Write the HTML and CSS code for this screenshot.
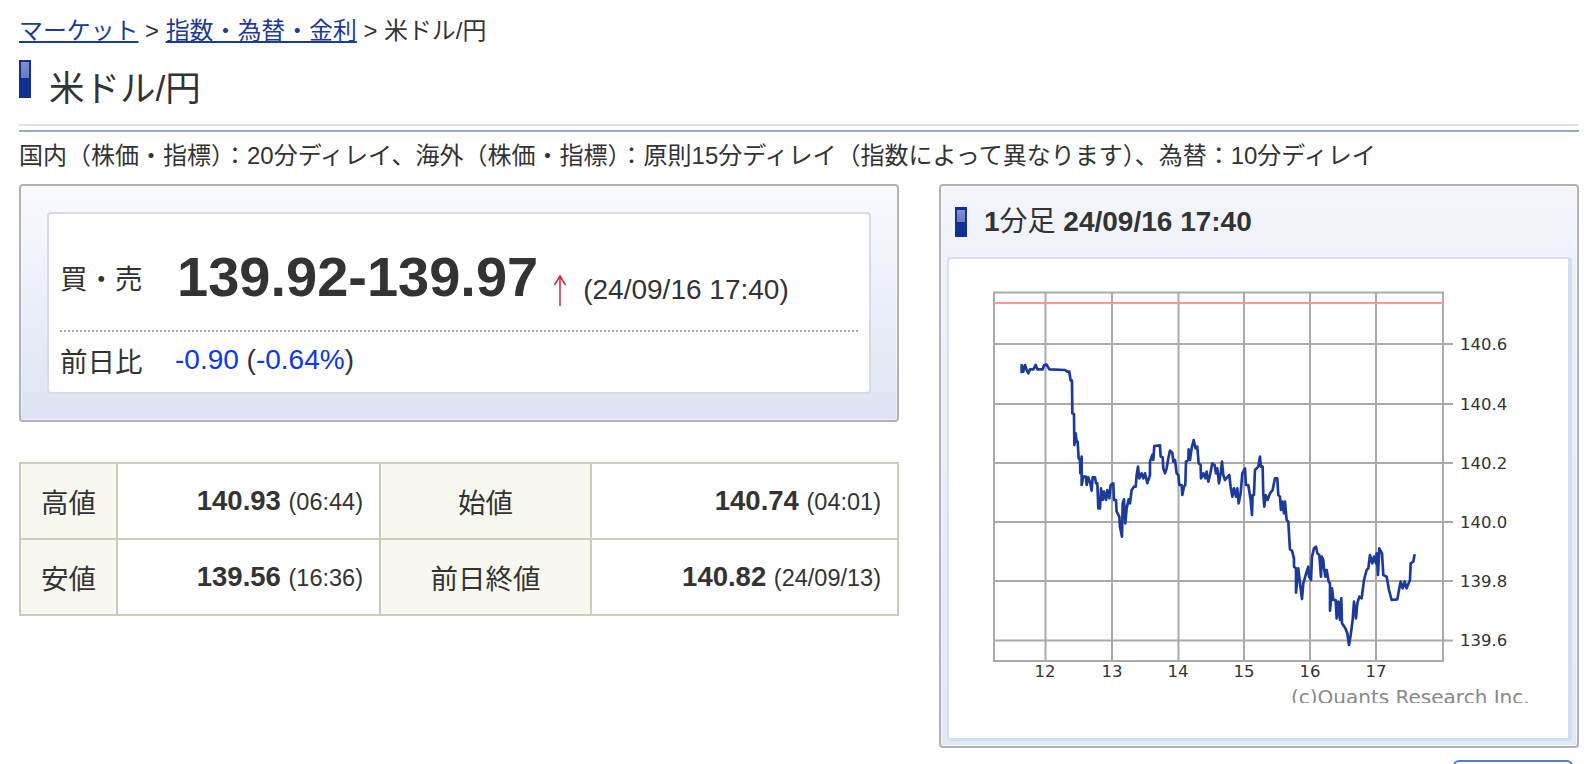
FILE: index.html
```html
<!DOCTYPE html>
<html lang="ja">
  <head>
    <meta charset="utf-8">
    <title>米ドル/円</title>
    <link rel="stylesheet" href="styles.css">
  </head>
  <body>
    <p class="crumbs"><a href="#">マーケット</a> &gt; <a href="#">指数・為替・金利</a> &gt; 米ドル/円</p>
    <h1 class="page-title"><span class="mark mark-large"></span>米ドル/円</h1>
    <div class="rule"></div>
    <p class="notice">国内（株価・指標）：20分ディレイ、海外（株価・指標）：原則15分ディレイ（指数によって異なります）、為替：10分ディレイ</p>

    <div class="columns">
      <div class="left">
        <div class="panel quote">
          <div class="card">
            <div class="quote-row">
              <span class="quote-label">買・売</span>
              <span class="price">139.92-139.97</span>
              <svg class="arrow" width="14" height="33" viewBox="0 0 14 33"><path d="M7 32V2M1.500 11L7 2l5.500 9"/></svg>
              <span class="stamp">(24/09/16 17:40)</span>
            </div>
            <div class="change-row">
              <span class="quote-label">前日比</span>
              <span class="change"><b>-0.90</b> (<b>-0.64%</b>)</span>
            </div>
          </div>
        </div>

        <table class="prices">
          <colgroup>
            <col class="col-a">
            <col class="col-b">
            <col class="col-c">
            <col class="col-d">
          </colgroup>
          <tr>
            <th>高値</th>
            <td><b>140.93</b> <small>(06:44)</small></td>
            <th>始値</th>
            <td><b>140.74</b> <small>(04:01)</small></td>
          </tr>
          <tr>
            <th>安値</th>
            <td><b>139.56</b> <small>(16:36)</small></td>
            <th>前日終値</th>
            <td><b>140.82</b> <small>(24/09/13)</small></td>
          </tr>
        </table>
      </div>

      <div class="right">
        <div class="panel chart-panel">
          <h2 class="chart-title"><span class="mark"></span>1<span class="thin">分足</span>&nbsp;24/09/16 17:40</h2>
          <div class="chart-card">
            <svg class="chart" width="618" height="441" viewBox="950 262 618 441">
              <g class="grid">
                <path d="M994 292.500H1443V661H994Z"/>
                <path d="M1045.500 292V661M1112 292V661M1178.500 292V661M1244 292V661M1310 292V661M1376 292V661"/>
                <path d="M994 344H1453M994 404H1453M994 463H1453M994 522H1453M994 581H1453M994 640.500H1453"/>
              </g>
              <path class="limit" d="M994 303H1443"/>
              <polyline class="trace" transform="translate(980 340) scale(.3333)" points="125,100 125,75 130,95 135,75 140,90 145,100 150,88 160,88 167,75 172,88 188,88 192,76 200,74 208,88 255,90 262,95 268,95 272,122 276,122 277,220 282,222 283,315 287,280 290,305 293,305 296,355 300,360 301,400 305,350 305,435 310,410 318,410 320,435 325,412 331,430 335,452 338,412 345,412 348,430 352,430 355,505 360,505 363,445 368,480 372,455 378,480 382,450 388,475 392,435 400,430 402,480 408,480 410,515 418,530 420,560 426,590 428,490 432,478 436,550 440,505 446,478 450,490 455,450 462,440 467,440 470,405 474,380 478,415 485,400 490,415 495,400 502,430 510,405 510,365 517,345 520,360 523,318 540,316 542,350 548,352 550,385 555,400 560,385 565,355 570,332 577,338 580,365 585,360 590,400 595,405 598,435 605,435 607,465 612,440 616,435 618,365 625,360 626,328 630,360 635,325 641,300 647,325 652,320 656,370 662,375 663,415 670,400 676,415 680,395 685,425 690,405 697,370 704,375 708,400 712,385 717,430 722,400 726,365 730,405 735,420 748,405 752,440 757,470 762,445 768,470 772,445 776,490 782,460 787,400 795,385 798,435 805,435 812,480 816,525 818,465 822,465 825,390 835,380 840,350 843,380 848,380 850,465 853,500 857,465 863,480 870,460 878,450 885,415 892,415 895,465 900,470 903,510 907,485 912,520 915,485 920,540 925,545 927,580 930,628 936,632 942,655"/>
              <polyline class="trace" transform="translate(1240 420) scale(.3333)" points="162,414 162,440 168,445 168,518 175,445 180,490 186,537 190,490 197,465 205,440 207,470 213,480 216,410 222,385 228,380 232,400 238,405 243,470 245,410 250,420 252,445 256,470 260,450 266,485 270,490 270,572 276,505 280,540 287,540 290,595 295,545 300,600 304,535 306,610 316,625 322,640 327,675 332,645 338,600 342,545 348,595 352,550 358,530 365,535 372,480 380,450 385,445 390,405 397,430 402,410 408,430 410,400 414,465 418,385 426,400 430,465 440,470 447,510 455,540 472,538 478,505 482,485 488,505 494,485 500,505 510,480 512,430 520,425 524,403"/>
              <g class="ticks">
                <text x="1460" y="350">140.6</text>
                <text x="1460" y="410">140.4</text>
                <text x="1460" y="469">140.2</text>
                <text x="1460" y="528">140.0</text>
                <text x="1460" y="587">139.8</text>
                <text x="1460" y="646">139.6</text>
              </g>
              <g class="ticks ticks-x">
                <text x="1045" y="677">12</text>
                <text x="1112" y="677">13</text>
                <text x="1178" y="677">14</text>
                <text x="1244" y="677">15</text>
                <text x="1310" y="677">16</text>
                <text x="1376" y="677">17</text>
              </g>
              <text class="credit" x="1291" y="703.500">(c)Quants Research Inc.</text>
            </svg>
          </div>
        </div>
        <div class="button-row"><a class="more" href="#"></a></div>
      </div>
    </div>
  </body>
</html>
```

FILE: styles.css
```css
html {
    overflow: hidden;
    background: white;
}

body {
    margin: 0;
    padding: 0 17px 0 19px;
    font-family: "Liberation Sans", "Noto Sans CJK JP", sans-serif;
    font-size: 23.900px;
    color: #333;
}

a {
    color: #1c3a9a;
}

.crumbs {
    margin: 0;
    padding-top: 16px;
    line-height: 30px;
}

.page-title {
    display: flex;
    margin: 14px 0 0;
    height: 64px;
    font-size: 35.500px;
    font-weight: normal;
    line-height: 58px;
}

.mark {
    display: block;
    flex: none;
    width: 12px;
    height: 30px;
    margin-right: 17px;
    background: #12308f linear-gradient(#7f92cc, #647cc2) 2px 3px / 8px 12px no-repeat;
}

.mark-large {
    height: 38px;
    margin-right: 18px;
    background-position: 2px 2px;
    background-size: 8px 16px;
}

.rule {
    height: 2px;
    padding-top: 2px;
    border-top: 2px solid #dce6f2;
    border-bottom: 2px solid #8fadd9;
}

.notice {
    margin: 0;
    padding-top: 8px;
    height: 44px;
    font-size: 24px;
    line-height: 32px;
    white-space: nowrap;
}

.columns {
    display: flex;
    justify-content: space-between;
    align-items: flex-start;
}

.left {
    width: 880px;
}

.right {
    width: 640px;
}

.panel {
    box-sizing: border-box;
    border: 2px solid #b2b2b2;
    border-radius: 4px;
    background: linear-gradient(#f9fafe, #dde3f3);
    box-shadow: inset 0 0 0 1px rgba(255, 255, 255, .5);
}

.quote {
    height: 238px;
    padding: 26px;
}

.card {
    box-sizing: border-box;
    height: 182px;
    padding: 0 11px;
    background: white;
    border: 2px solid #d8dbe3;
    border-radius: 4px;
}

.quote-row {
    display: flex;
    align-items: center;
    box-sizing: border-box;
    height: 118px;
    padding-top: 9px;
    border-bottom: 2px dotted #aaa;
}

.quote-label {
    width: 117px;
    flex: none;
    font-size: 27.500px;
}

.price {
    font-size: 56px;
    font-weight: bold;
}

.arrow {
    margin: 27px 16px 0 15px;
    fill: none;
    stroke: #d0283c;
    stroke-width: 1.500;
}

.stamp {
    margin-top: 26px;
    font-size: 28px;
}

.change-row {
    display: flex;
    align-items: center;
    height: 56px;
}

.change {
    margin-left: -2px;
    font-size: 28px;
}

.change b {
    font-weight: normal;
    color: #0b37ee;
}

.prices {
    width: 878px;
    margin-top: 40px;
    border-collapse: collapse;
    table-layout: fixed;
}

.col-a {
    width: 97px;
}

.col-b {
    width: 263px;
}

.col-c {
    width: 211px;
}

.col-d {
    width: 307px;
}

.prices th,
.prices td {
    height: 74px;
    padding: 0;
    border: 2px solid #ccccbb;
}

.prices th {
    background: #f8f8f0;
    font-size: 27.500px;
    font-weight: normal;
}

.prices td {
    padding-right: 16px;
    text-align: right;
    font-size: 27.500px;
}

.prices small {
    font-size: 23.500px;
}

.chart-panel {
    height: 564px;
    padding: 0 5px 4px 6px;
    background: linear-gradient(#f5f6fc 0, #eef1fa 14%, #e3e8f6 100%);
}

.chart-title {
    display: flex;
    align-items: center;
    height: 71px;
    margin: 0;
    padding-left: 8px;
    font-size: 28px;
    line-height: 30px;
}

.thin {
    font-weight: normal;
}

.chart-card {
    box-sizing: border-box;
    height: 484px;
    padding: 3px 0 0 1px;
    background: white;
    border: 2px solid #d8deec;
    border-right: 4px solid #d3def3;
    border-bottom: 3px solid #d3def3;
    border-radius: 4px;
}

.chart {
    display: block;
}

.grid path {
    fill: none;
    stroke: #aaa;
    stroke-width: 2;
}

.limit {
    stroke: #ff9595;
    stroke-width: 2;
}

.trace {
    fill: none;
    stroke: #1c3a9a;
    stroke-width: 8;
    stroke-linejoin: round;
}

.ticks text {
    font-family: "DejaVu Sans", sans-serif;
    font-size: 16.500px;
    fill: #333;
}

.ticks-x text {
    text-anchor: middle;
}

.credit {
    font-family: "DejaVu Sans", sans-serif;
    font-size: 20px;
    fill: #888;
}

.button-row {
    display: flex;
    justify-content: flex-end;
    padding: 12px 6px 0 0;
}

.more {
    display: block;
    width: 116px;
    height: 30px;
    border: 2px solid #4b7fd6;
    border-radius: 6px;
}
```
